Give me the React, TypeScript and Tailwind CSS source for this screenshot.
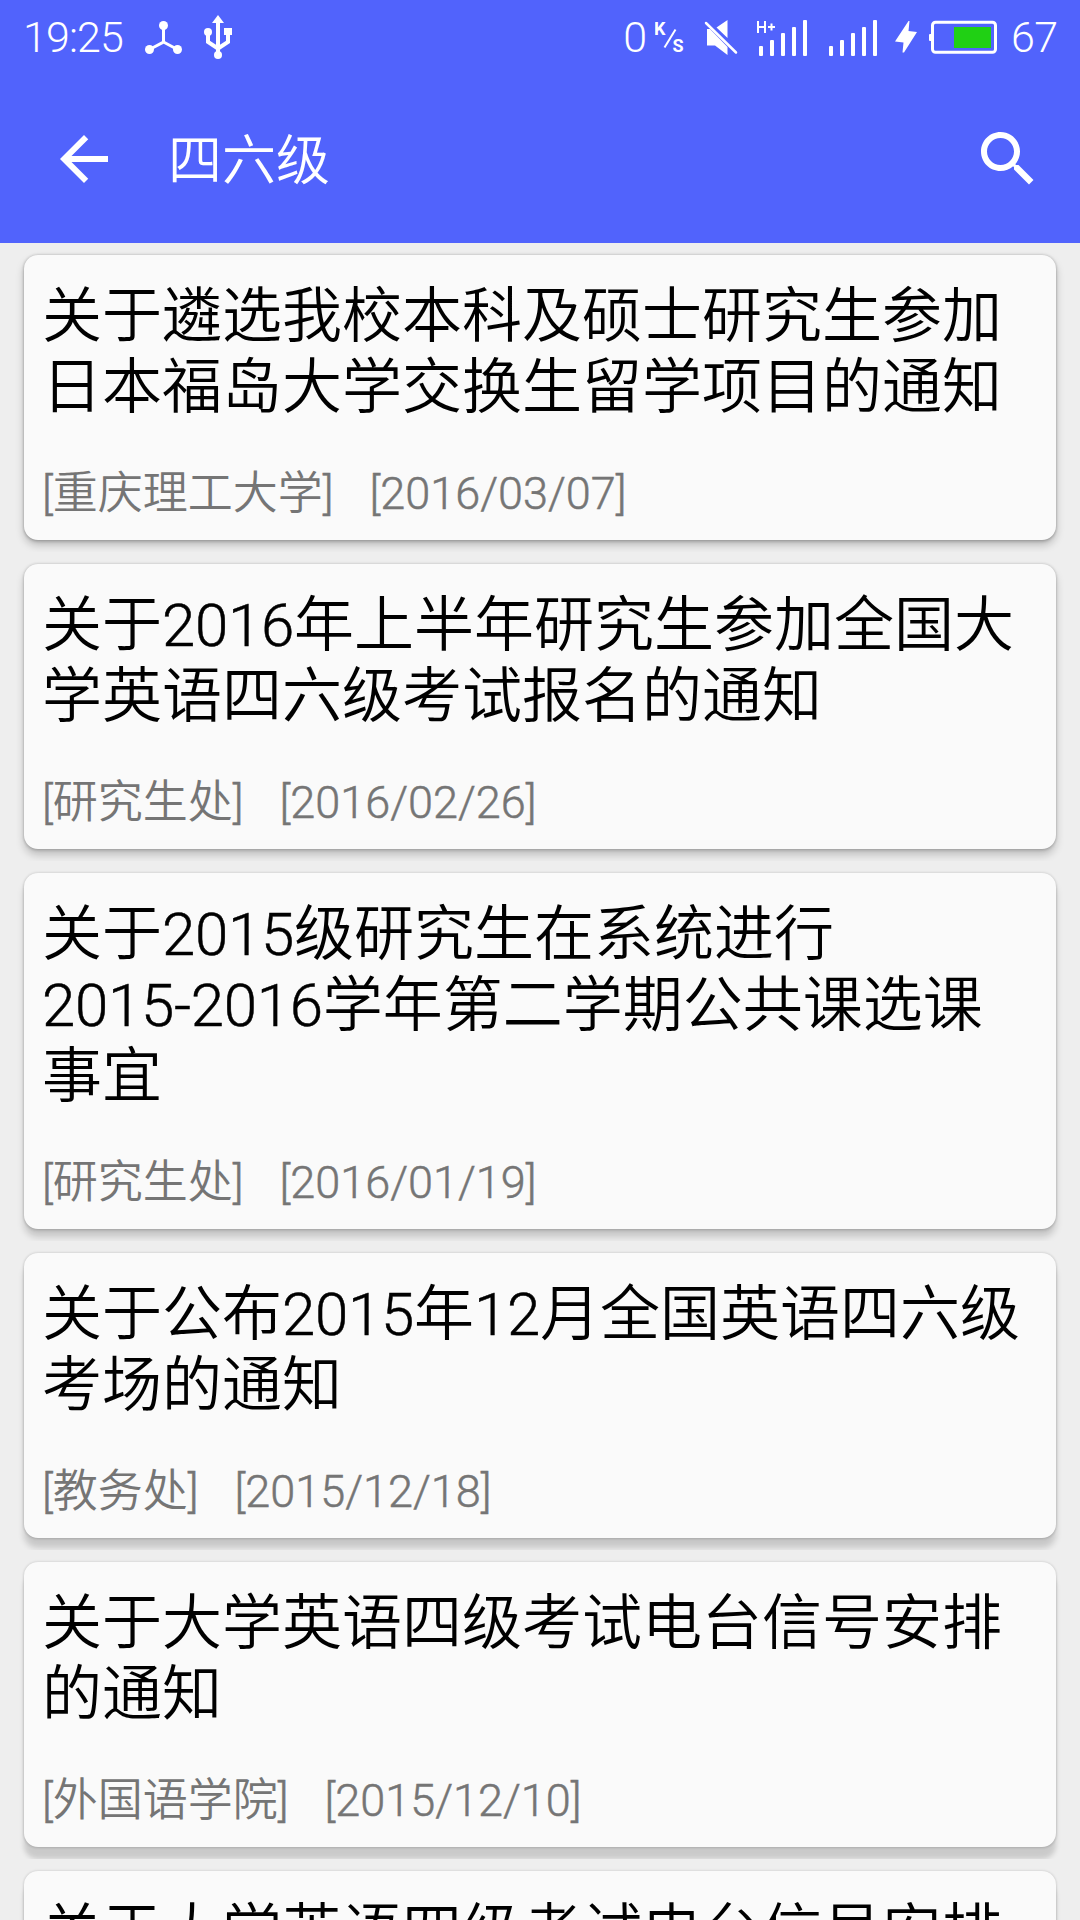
import type { ReactNode } from 'react';

interface Notice {
  id: number;
  title: string;
  source: string;
  date: string;
}

const notices: Notice[] = [
  { id: 1, title: '关于遴选我校本科及硕士研究生参加日本福岛大学交换生留学项目的通知', source: '重庆理工大学', date: '2016/03/07' },
  { id: 2, title: '关于2016年上半年研究生参加全国大学英语四六级考试报名的通知', source: '研究生处', date: '2016/02/26' },
  { id: 3, title: '关于2015级研究生在系统进行\n2015-2016学年第二学期公共课选课事宜', source: '研究生处', date: '2016/01/19' },
  { id: 4, title: '关于公布2015年12月全国英语四六级考场的通知', source: '教务处', date: '2015/12/18' },
  { id: 5, title: '关于大学英语四级考试电台信号安排的通知', source: '外国语学院', date: '2015/12/10' },
  { id: 6, title: '关于大学英语四级考试电台信号安排的通知', source: '外国语学院', date: '2015/12/10' },
];

// The shadow falls further the lower a card sits on the screen
const shadows = [
  'shadow-[0_0_3px_rgba(0,0,0,0.24),0_2px_3px_rgba(0,0,0,0.1),0_5px_8px_rgba(0,0,0,0.22)]',
  'shadow-[0_0_3px_rgba(0,0,0,0.22),0_2px_3px_rgba(0,0,0,0.08),0_6px_8px_rgba(0,0,0,0.2)]',
  'shadow-[0_0_3px_rgba(0,0,0,0.2),0_2px_3px_rgba(0,0,0,0.07),0_8px_7px_rgba(0,0,0,0.17)]',
  'shadow-[0_0_3px_rgba(0,0,0,0.18),0_1px_3px_rgba(0,0,0,0.08),0_10px_6px_rgba(0,0,0,0.16)]',
  'shadow-[0_0_3px_rgba(0,0,0,0.16),0_1px_3px_rgba(0,0,0,0.08),0_12px_5px_rgba(0,0,0,0.15)]',
];

function StatusIcon({ width, className, children }: { width: number; className?: string; children: ReactNode }) {
  return (
    <svg width={width} height="72" viewBox={`0 0 ${width} 72`} fill="#fff" className={`shrink-0 ${className ?? ''}`}>
      {children}
    </svg>
  );
}

function SignalBars() {
  return (
    <>
      <rect x="2" y="46" width="4" height="10" rx="1" />
      <rect x="13" y="40" width="4" height="16" rx="1" />
      <rect x="24" y="33" width="4" height="23" rx="1" />
      <rect x="35" y="27" width="4" height="29" rx="1" />
      <rect x="46" y="20" width="4" height="36" rx="1" />
    </>
  );
}

function StatusBar() {
  return (
    <div className="flex h-[72px] items-center pl-[23px] pr-6 text-[43px] font-light leading-[72px] text-white">
      <span className="w-[121px] pt-px tracking-[-0.9px]">19:25</span>
      {/* Share */}
      <StatusIcon width={39}>
        <path d="M19.5 25.5V42L5.5 49.5M19.5 42l14 7.5" stroke="#fff" strokeWidth="3" fill="none" />
        <circle cx="19.5" cy="25.5" r="4.5" />
        <circle cx="5.5" cy="49.5" r="4.5" />
        <circle cx="33.5" cy="49.5" r="4.5" />
      </StatusIcon>
      {/* USB */}
      <StatusIcon width={28} className="ml-[21px]">
        <path d="M14 15l6 8H8z" />
        <path d="M14 20v34M4 32v10l10 6.5L24 42V32" stroke="#fff" strokeWidth="4" fill="none" />
        <circle cx="4" cy="32" r="4" />
        <rect x="20" y="28" width="8" height="7" />
        <circle cx="14" cy="55" r="4" />
      </StatusIcon>

      <span className="ml-auto pt-px">0</span>
      {/* Network speed unit */}
      <StatusIcon width={32} className="ml-[8px]">
        <text x="-1" y="35" fontSize="18" fontWeight="700">K</text>
        <path d="M9.5 47.5L20.5 29.5" stroke="#fff" strokeWidth="2" />
        <text x="17.5" y="52" fontSize="18" fontWeight="700">S</text>
      </StatusIcon>
      {/* Muted */}
      <StatusIcon width={34} className="ml-[17px]">
        <path d="M23.5 20v18L12.5 27.5zM3 29h3l17.5 18V55L11 45.5H3z" />
        <path d="M2 23L32 52.5" stroke="#fff" strokeWidth="2.5" strokeLinecap="round" />
      </StatusIcon>
      <StatusIcon width={52} className="ml-[19px]">
        <path d="M1 21v12M8 21v12M1 27h7M11 27h7M14.5 23.5v7" stroke="#fff" strokeWidth="2" fill="none" />
        <SignalBars />
      </StatusIcon>
      <StatusIcon width={52} className="ml-[18px]">
        <SignalBars />
      </StatusIcon>
      {/* Charging */}
      <StatusIcon width={22} className="ml-4">
        <path d="M13.5 21L0 41.5l8.5 1-1 10h1.5L22 32l-8.5-1 1-10z" />
      </StatusIcon>
      <StatusIcon width={68} className="ml-3">
        <rect x="0" y="34" width="3" height="7" rx="1" />
        <rect x="3.5" y="22.3" width="63" height="30" rx="3" fill="none" stroke="#fff" strokeWidth="3" />
        <rect x="25" y="27" width="37" height="21" fill="#20d014" />
      </StatusIcon>
      <span className="ml-3.5 w-[45px] pt-px tracking-[-0.5px]">67</span>
    </div>
  );
}

function Toolbar() {
  return (
    <div className="flex h-[171px] items-center pl-12 pr-9 pt-[3px] text-white">
      <button className="size-[72px]">
        <svg viewBox="0 0 24 24" fill="currentColor" className="size-full">
          <path d="M20 11H7.83l5.59-5.59L12 4l-8 8 8 8 1.41-1.41L7.83 13H20v-2z" />
        </svg>
      </button>
      <h1 className="ml-12 pt-[5px] text-[54px] font-[350] leading-none">四六级</h1>
      <button className="ml-auto size-[72px]">
        <svg viewBox="0 0 24 24" fill="currentColor" className="size-full">
          <path d="M15.5 14h-.79l-.28-.27C15.41 12.59 16 11.11 16 9.5 16 5.91 13.09 3 9.5 3S3 5.91 3 9.5 5.91 16 9.5 16c1.61 0 3.09-.59 4.23-1.57l.27.28v.79l5 4.99L20.49 19l-4.99-5zm-6 0C7.01 14 5 11.99 5 9.5S7.01 5 9.5 5 14 7.01 14 9.5 11.99 14 9.5 14z" />
        </svg>
      </button>
    </div>
  );
}

// Roboto is thinner than the CJK face at this weight, so numbers get a thin stroke
function withNumbers(text: string) {
  return text.split(/([\d-]+)/).map((part, i) =>
    i % 2 ? (
      <span key={i} className="tracking-[-0.3px] [-webkit-text-stroke:0.5px_currentColor]">{part}</span>
    ) : (
      part
    )
  );
}

function NoticeCard({ notice, shadow }: { notice: Notice; shadow: string }) {
  return (
    <article className={`rounded-[14px] bg-[#fafafa] pb-[18px] pl-[18px] pr-5 pt-[26px] ${shadow}`}>
      <h2 className="whitespace-pre-line text-[60px] font-[350] leading-[71px] text-black">{withNumbers(notice.title)}</h2>
      <p className="mt-[43px] whitespace-pre text-[45px] font-[350] leading-[56px] text-[#757575] [word-spacing:1px]">
        <span className="[-webkit-text-stroke:0.5px_currentColor]">[</span>
        {notice.source}
        <span className="[-webkit-text-stroke:0.5px_currentColor]">{`]   [${notice.date}]`}</span>
      </p>
    </article>
  );
}

export default function App() {
  return (
    <div className="flex h-[1920px] w-[1080px] flex-col overflow-hidden bg-[#eeeeee] font-[Roboto,'Noto_Sans_CJK_SC',sans-serif]">
      <header className="shrink-0 bg-[#5163fc]">
        <StatusBar />
        <Toolbar />
      </header>
      <ul className="min-h-0 flex-1 overflow-hidden">
        {notices.map((notice, index) => (
          <li key={notice.id} className="overflow-hidden px-6 py-3">
            <NoticeCard notice={notice} shadow={shadows[Math.min(index, shadows.length - 1)]} />
          </li>
        ))}
      </ul>
    </div>
  );
}
